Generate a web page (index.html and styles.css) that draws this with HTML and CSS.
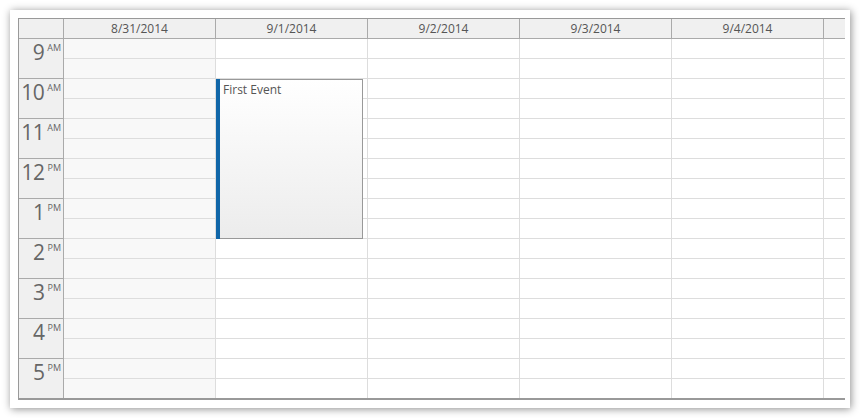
FILE: index.html
```html
<!DOCTYPE html>
<html>
<head>
<meta charset="utf-8">
<link rel="stylesheet" href="styles.css">
</head>
<body>
<div class="page">
  <div class="panel">
    <div class="calendar">
      <div class="header">
        <div class="corner"></div>
        <div class="colheader">8/31/2014</div>
        <div class="colheader">9/1/2014</div>
        <div class="colheader">9/2/2014</div>
        <div class="colheader">9/3/2014</div>
        <div class="colheader">9/4/2014</div>
        <div class="colheader filler"></div>
      </div>
      <div class="body">
        <div class="rowheaders">
          <div class="hour"><span class="num">9</span><span class="ampm">AM</span></div>
          <div class="hour"><span class="num">10</span><span class="ampm">AM</span></div>
          <div class="hour"><span class="num">11</span><span class="ampm">AM</span></div>
          <div class="hour"><span class="num">12</span><span class="ampm">PM</span></div>
          <div class="hour"><span class="num">1</span><span class="ampm">PM</span></div>
          <div class="hour"><span class="num">2</span><span class="ampm">PM</span></div>
          <div class="hour"><span class="num">3</span><span class="ampm">PM</span></div>
          <div class="hour"><span class="num">4</span><span class="ampm">PM</span></div>
          <div class="hour"><span class="num">5</span><span class="ampm">PM</span></div>
        </div>
        <div class="day weekend"></div>
        <div class="day">
          <div class="event">
            <div class="bar"></div>
            <div class="event-text">First Event</div>
          </div>
        </div>
        <div class="day"></div>
        <div class="day"></div>
        <div class="day"></div>
        <div class="day filler"></div>
      </div>
    </div>
  </div>
</div>
</body>
</html>
```
FILE: styles.css
```css
html, body {
  margin: 0;
  padding: 0;
  background: #fff;
}

.page {
  padding: 10px;
}

.panel {
  width: 832px;
  height: 390px;
  padding: 8px 0 0 8px;
  background: #fff;
  box-shadow: 1px 1px 8px rgba(0, 0, 0, 0.45);
}

.calendar {
  width: 826px;
  border-left: 1px solid #999;
  border-top: 1px solid #999;
  border-bottom: 2px solid #999;
  font-family: "Open Sans", "DejaVu Sans", sans-serif;
  color: #555;
}

.header {
  display: flex;
  height: 20px;
}

.corner,
.colheader {
  box-sizing: border-box;
  height: 20px;
  background: #f0f0f0;
  border-bottom: 1px solid #aaa;
  border-right: 1px solid #aaa;
}

.corner {
  width: 45px;
}

.colheader {
  width: 152px;
  font-size: 12px;
  line-height: 19px;
  text-align: center;
  color: #555;
}

.colheader.filler {
  width: 21px;
  border-right: none;
}

.body {
  display: flex;
  height: 359px;
}

.rowheaders {
  width: 45px;
}

.hour {
  box-sizing: border-box;
  height: 40px;
  background: #f0f0f0;
  border-right: 1px solid #aaa;
  border-bottom: 1px solid #aaa;
  text-align: right;
  padding: 2px 2px 0 0;
  color: #666;
  line-height: 22px;
}

.hour:last-child {
  height: 39px;
  border-bottom: none;
}

.num {
  font-size: 21px;
  letter-spacing: -0.5px;
}

.ampm {
  font-size: 9px;
  vertical-align: top;
  line-height: 14px;
  padding-left: 3px;
}

.day {
  position: relative;
  box-sizing: border-box;
  width: 152px;
  border-right: 1px solid #ddd;
  background-color: #fff;
  background-image: repeating-linear-gradient(to bottom, transparent 0, transparent 19px, #ddd 19px, #ddd 20px);
}

.day.weekend {
  background-color: #f8f8f8;
}

.day.filler {
  width: 21px;
  border-right: none;
}

.event {
  position: absolute;
  top: 40px;
  left: 0;
  box-sizing: border-box;
  width: 147px;
  height: 160px;
  border: 1px solid #999;
  background: linear-gradient(to bottom, #ffffff, #ececec);
}

.bar {
  position: absolute;
  left: -1px;
  top: -1px;
  bottom: -1px;
  width: 4px;
  background: #1066a8;
}

.event-text {
  padding: 2px 0 0 6px;
  font-size: 12px;
  line-height: 16px;
  color: #555;
}
```
